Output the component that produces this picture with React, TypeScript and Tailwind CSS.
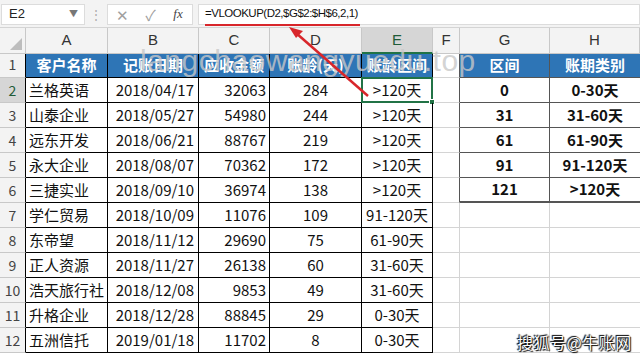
import React from 'react';

const FONT = '[font-family:"Noto_Sans_CJK_SC","Noto_Sans",sans-serif]';

const rows = [
  ['兰格英语', '2018/04/17', '32063', '284', '>120天'],
  ['山泰企业', '2018/05/27', '54980', '244', '>120天'],
  ['远东开发', '2018/06/21', '88767', '219', '>120天'],
  ['永大企业', '2018/08/07', '70362', '172', '>120天'],
  ['三捷实业', '2018/09/10', '36974', '138', '>120天'],
  ['学仁贸易', '2018/10/09', '11076', '109', '91-120天'],
  ['东帝望', '2018/11/12', '29690', '75', '61-90天'],
  ['正人资源', '2018/11/27', '26138', '60', '31-60天'],
  ['浩天旅行社', '2018/12/08', '9853', '49', '31-60天'],
  ['升格企业', '2018/12/28', '88845', '29', '0-30天'],
  ['五洲信托', '2019/01/18', '11702', '8', '0-30天'],
];

const lookup = [
  ['0', '0-30天'],
  ['31', '31-60天'],
  ['61', '61-90天'],
  ['91', '91-120天'],
  ['121', '>120天'],
];

const headers = ['客户名称', '记账日期', '应收金额', '账龄(天)', '账龄区间'];
const colLetters = ['A', 'B', 'C', 'D', 'E', 'F', 'G', 'H'];
// text alignment for A..E data cells
const align = ['justify-start pl-[3px]', 'justify-end pr-[4px]', 'justify-end pr-[3px]', 'justify-center', 'justify-center'];

function FormulaBar() {
  return (
    <div className="h-[28px] flex items-center bg-[#f3f3f3] border-b border-[#d4d4d4] pt-[1px]">
      <div className="w-[84px] h-[21px] ml-[1px] bg-white border border-[#dcdcdc] flex items-center justify-between pl-[7px] pr-[6px]">
        <span className="text-[13px] text-[#222] [font-family:'Liberation_Sans',sans-serif]">E2</span>
        <span className="text-[9px] text-[#777]">▼</span>
      </div>
      <div className="w-[22px] flex justify-center text-[#aaa] text-[12px] leading-none">⋮</div>
      <div className="w-[86px] h-[21px] bg-white border border-[#dcdcdc] flex items-center">
        <span className="w-[29px] text-center text-[#a0a0a0] text-[15px] leading-none">✕</span>
        <span className="w-[27px] text-center text-[#a0a0a0] text-[15px] leading-none">✓</span>
        <span className="w-[28px] text-center text-[#444] text-[13px] italic [font-family:'Liberation_Serif',serif]">fx</span>
      </div>
      <div className="flex-1 h-[21px] ml-[5px] bg-white border border-[#dcdcdc] flex items-center pl-[6px]">
        <span className="relative text-[11.5px] text-[#111] tracking-[-0.5px] [font-family:'Liberation_Sans',sans-serif]">
          =VLOOKUP(D2,$G$2:$H$6,2,1)
          <span className="absolute left-0 right-[-2px] bottom-[-3px] h-[2px] bg-[#d8262b]" />
        </span>
      </div>
    </div>
  );
}

export default function App() {
  return (
    <div className={`relative w-[640px] h-[355px] overflow-hidden bg-white ${FONT}`}>
      <FormulaBar />
      <div className="grid grid-cols-[26px_82px_91px_71px_92px_71px_27px_90px_90px] grid-rows-[26px_24px_repeat(11,25px)]">
        {/* column header row */}
        <div className="relative bg-[#f3f3f3] border-r border-b border-[#c8c8c8]">
          <div className="absolute right-[3px] bottom-[3px] w-0 h-0 border-l-[12px] border-l-transparent border-b-[12px] border-b-[#bdbdbd]" />
        </div>
        {colLetters.map((c) => (
          <div
            key={c}
            className={`flex items-center justify-center text-[15px] border-r border-b ${
              c === 'E' ? 'bg-[#d6d6d6] text-[#1f5c38] border-b-2 border-b-[#217346] border-r-[#c8c8c8]' : 'bg-[#f3f3f3] text-[#333] border-[#c8c8c8]'
            } [font-family:'Liberation_Sans',sans-serif]`}
          >
            {c}
          </div>
        ))}

        {/* row 1 */}
        <div className="flex items-end justify-center pb-[2px] bg-[#f3f3f3] text-[14px] text-[#444] border-b border-[#c8c8c8] border-r border-r-black">
          1
        </div>
        {headers.map((h) => (
          <div key={h} className="flex items-center justify-center bg-[#2e75b6] text-white font-bold text-[15px] border-r border-b border-black">
            {h}
          </div>
        ))}
        <div className="border-b border-[#d4d4d4] border-r border-r-[#555]" />
        <div className="flex items-center justify-center bg-[#2e75b6] text-white font-bold text-[15px] border-r border-b border-[#555]">区间</div>
        <div className="flex items-center justify-center bg-[#2e75b6] text-white font-bold text-[15px] border-b border-[#555]">账期类别</div>

        {/* data rows */}
        {rows.map((r, i) => {
          const n = i + 2;
          const lk = lookup[i];
          const lastLk = i === 4;
          return (
            <React.Fragment key={n}>
              <div
                className={`flex items-end justify-center pb-[1px] text-[14px] border-b border-[#c8c8c8] border-r border-r-black ${
                  n === 2 ? 'bg-[#d6d6d6] text-[#1f5c38]' : 'bg-[#f3f3f3] text-[#444]'
                }`}
              >
                {n}
              </div>
              {r.map((v, j) => (
                <div key={j} className={`relative flex items-center ${align[j]} text-[15px] text-[#111] border-r border-b border-black`}>
                  {v}
                  {n === 2 && j === 4 && (
                    <div className="absolute -left-[1px] -top-[1px] -right-[1px] -bottom-[1px] border-2 border-[#217346]">
                      <div className="absolute -right-[4px] -bottom-[4px] w-[6px] h-[6px] bg-[#217346] border border-white" />
                    </div>
                  )}
                </div>
              ))}
              <div className={`border-b border-[#d4d4d4] border-r ${lk ? 'border-r-[#555]' : 'border-r-[#d4d4d4]'}`} />
              {lk ? (
                <>
                  <div className={`flex items-center justify-center font-bold text-[15px] text-[#111] border-r border-[#555] ${lastLk ? 'border-b-2' : 'border-b'}`}>
                    {lk[0]}
                  </div>
                  <div className={`flex items-center justify-center font-bold text-[15px] text-[#111] border-[#555] ${lastLk ? 'border-b-2' : 'border-b'}`}>
                    {lk[1]}
                  </div>
                </>
              ) : (
                <>
                  <div className="border-r border-b border-[#d4d4d4]" />
                  <div className="border-b border-[#d4d4d4]" />
                </>
              )}
            </React.Fragment>
          );
        })}
      </div>

      {/* site watermark over the header row */}
      <div className="absolute left-[140px] top-[46px] text-[30px] leading-none text-[#c8c8c8]/80 tracking-[0.5px] [font-family:'Liberation_Sans',sans-serif] pointer-events-none">
        langchaowangyuedu.top
      </div>

      {/* red arrow */}
      <svg className="absolute left-0 top-0 pointer-events-none" width="640" height="355">
        <line x1="368" y1="96" x2="296" y2="33" stroke="#d8262b" strokeWidth="2.5" />
        <polygon points="289,27 303,31 296,38" fill="#d8262b" />
      </svg>

      {/* sohu watermark */}
      <div className="absolute left-[517px] top-[332px] text-[16px] leading-[20px] text-white tracking-[0.5px] [text-shadow:0_0_1px_#000,1px_1px_1px_#000,-1px_-1px_1px_#000] pointer-events-none">
        搜狐号@牛账网
      </div>
    </div>
  );
}
